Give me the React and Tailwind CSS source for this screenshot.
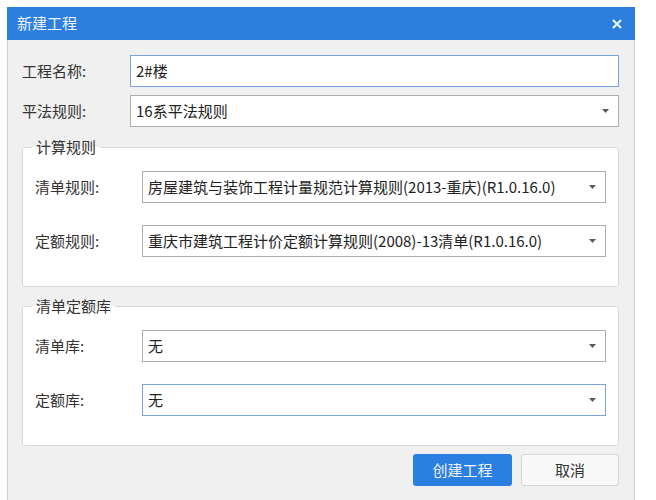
import React from "react";

const font = { fontFamily: '"Noto Sans CJK SC", "Noto Sans", sans-serif' };

const Arrow = () => (
  <svg width="7" height="4" viewBox="0 0 7 4" className="shrink-0">
    <path d="M0 0h7L3.5 4z" fill="#5a5a5a" />
  </svg>
);

const Select = ({ value, focused }) => (
  <div
    className={`flex h-[32px] flex-1 items-center justify-between bg-white pl-[5px] pr-[9px] ${
      focused ? "border border-[#7aa3dc]" : "border border-[#adadad]"
    }`}
  >
    <span className="text-[15px] text-[#222]">{value}</span>
    <Arrow />
  </div>
);

const Group = ({ title, rows }) => (
  <fieldset className="rounded-[3px] border border-[#d9d9d9] bg-white px-[12px] pb-[29px] pt-[14px]">
    <legend className="-ml-[3px] px-[4px] text-[15px] leading-[20px] text-[#333]">{title}</legend>
    <div className="flex flex-col gap-[22px]">
      {rows.map((r) => (
        <div key={r.label} className="flex items-center">
          <span className="w-[107px] shrink-0 text-[15px] text-[#333]">{r.label}</span>
          <Select value={r.value} focused={r.focused} />
        </div>
      ))}
    </div>
  </fieldset>
);

export default function App() {
  return (
    <div className="h-[500px] w-[656px] overflow-hidden bg-white pl-[7px] pt-[7px]" style={font}>
      <div className="w-[628px] border-x border-[#c6cfdc]">
        {/* Title bar */}
        <div className="-mx-px flex h-[33px] items-center justify-between bg-[#2c7fdf] pl-[10px] pr-[13px]">
          <span className="text-[15px] text-[#eef4fc]">新建工程</span>
          <svg width="10" height="10" viewBox="0 0 10 10">
            <path d="M1 1l8 8M9 1l-8 8" stroke="#fff" strokeWidth="1.8" />
          </svg>
        </div>

        <div className="flex h-[470px] flex-col bg-[#f0f0f0] pl-[14px] pr-[15px] pt-[15px]">
          <div className="flex items-center">
            <span className="w-[108px] shrink-0 text-[15px] text-[#333]">工程名称:</span>
            <div className="flex h-[32px] flex-1 items-center border border-[#7aa3dc] bg-white pl-[5px]">
              <span className="text-[15px] text-[#222]">2#楼</span>
            </div>
          </div>
          <div className="mt-[8px] flex items-center">
            <span className="w-[108px] shrink-0 text-[15px] text-[#333]">平法规则:</span>
            <Select value="16系平法规则" />
          </div>

          <div className="mt-[10px]">
            <Group
              title="计算规则"
              rows={[
                { label: "清单规则:", value: "房屋建筑与装饰工程计量规范计算规则(2013-重庆)(R1.0.16.0)" },
                { label: "定额规则:", value: "重庆市建筑工程计价定额计算规则(2008)-13清单(R1.0.16.0)" },
              ]}
            />
          </div>

          <div className="mt-[9px]">
            <Group
              title="清单定额库"
              rows={[
                { label: "清单库:", value: "无" },
                { label: "定额库:", value: "无", focused: true },
              ]}
            />
          </div>

          <div className="mt-[8px] flex justify-end gap-[9px]">
            <button className="h-[32px] w-[99px] rounded-[3px] bg-[#2b7fe0] text-[15px] text-[#eef4fc]">
              创建工程
            </button>
            <button className="h-[32px] w-[98px] rounded-[3px] border border-[#d3d6db] bg-[#f9f9f9] text-[15px] text-[#333]">
              取消
            </button>
          </div>
        </div>
      </div>
    </div>
  );
}
